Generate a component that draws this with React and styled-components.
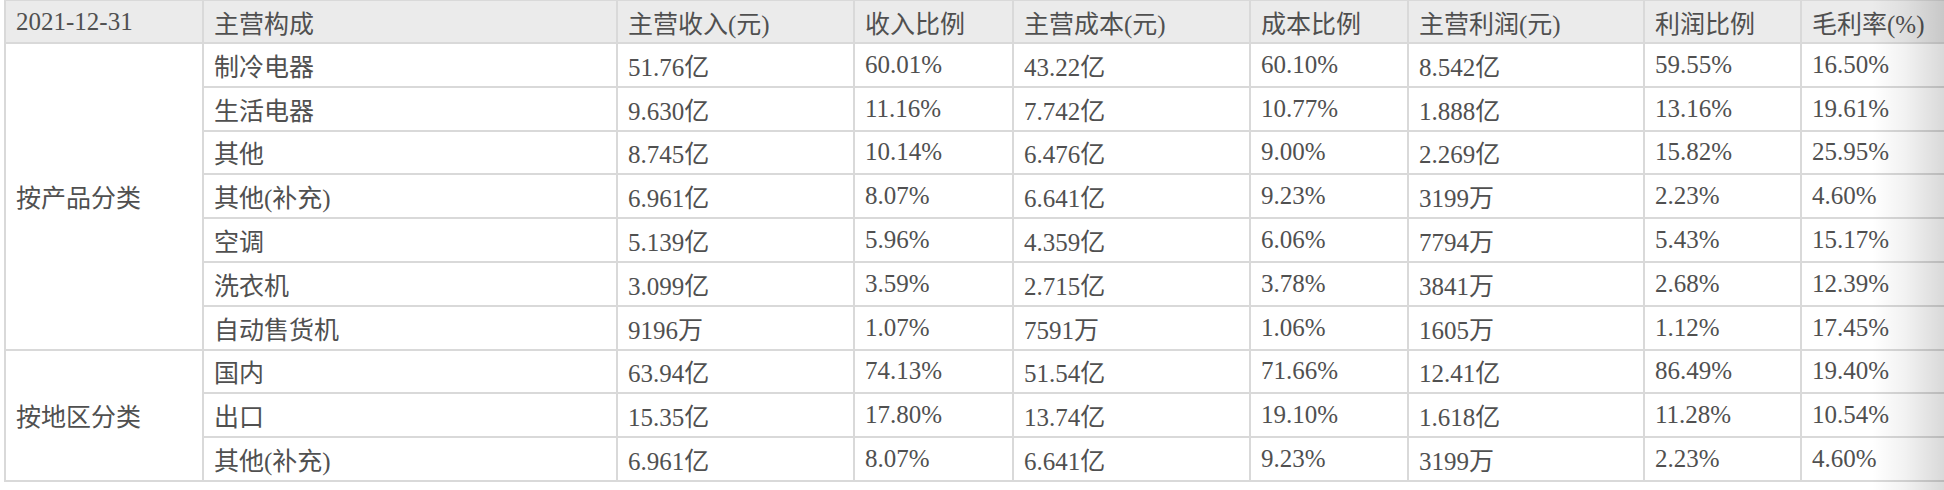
import React from "react";
import styled, { createGlobalStyle } from "styled-components";

const Global = createGlobalStyle`
  html, body { margin: 0; padding: 0; background: #ffffff; }
  body { font-family: "Liberation Serif", "Noto Sans CJK SC", serif; }
`;

const Viewport = styled.div`
  position: relative;
  width: 1944px;
  height: 490px;
  overflow: hidden;
  background: #fff;
`;

const Scroller = styled.div`
  padding-left: 4px;
  margin-top: -1px;
`;

const Table = styled.table`
  border-collapse: collapse;
  table-layout: fixed;
  width: 1955px;
  font-family: "Liberation Serif", "Noto Sans CJK SC", serif;
  font-size: 25px;
  color: #505050;
  border: 2px solid #d9d9d9;
`;

const HeadCell = styled.th`
  background: #ebebeb;
  font-weight: normal;
  text-align: left;
  height: 41px;
  padding: 0 10px;
  border: 2px solid #d9d9d9;
  white-space: nowrap;
  overflow: hidden;
`;

const Cell = styled.td`
  height: 41.8px;
  padding: 0 10px;
  border: 2px solid #d9d9d9;
  white-space: nowrap;
  vertical-align: middle;
  overflow: hidden;
`;

const RightShade = styled.div`
  position: absolute;
  top: 0;
  right: 0;
  width: 72px;
  height: 100%;
  pointer-events: none;
  background: linear-gradient(to right, rgba(0, 0, 0, 0) 0%, rgba(0, 0, 0, 0.05) 45%, rgba(0, 0, 0, 0.15) 100%);
`;

const widths = [198, 414, 237, 159, 237, 158, 236, 157, 159];

const headers = [
  "2021-12-31",
  "主营构成",
  "主营收入(元)",
  "收入比例",
  "主营成本(元)",
  "成本比例",
  "主营利润(元)",
  "利润比例",
  "毛利率(%)",
];

const groups = [
  {
    name: "按产品分类",
    rows: [
      ["制冷电器", "51.76亿", "60.01%", "43.22亿", "60.10%", "8.542亿", "59.55%", "16.50%"],
      ["生活电器", "9.630亿", "11.16%", "7.742亿", "10.77%", "1.888亿", "13.16%", "19.61%"],
      ["其他", "8.745亿", "10.14%", "6.476亿", "9.00%", "2.269亿", "15.82%", "25.95%"],
      ["其他(补充)", "6.961亿", "8.07%", "6.641亿", "9.23%", "3199万", "2.23%", "4.60%"],
      ["空调", "5.139亿", "5.96%", "4.359亿", "6.06%", "7794万", "5.43%", "15.17%"],
      ["洗衣机", "3.099亿", "3.59%", "2.715亿", "3.78%", "3841万", "2.68%", "12.39%"],
      ["自动售货机", "9196万", "1.07%", "7591万", "1.06%", "1605万", "1.12%", "17.45%"],
    ],
  },
  {
    name: "按地区分类",
    rows: [
      ["国内", "63.94亿", "74.13%", "51.54亿", "71.66%", "12.41亿", "86.49%", "19.40%"],
      ["出口", "15.35亿", "17.80%", "13.74亿", "19.10%", "1.618亿", "11.28%", "10.54%"],
      ["其他(补充)", "6.961亿", "8.07%", "6.641亿", "9.23%", "3199万", "2.23%", "4.60%"],
    ],
  },
];

export default function App() {
  return (
    <>
      <Global />
      <Viewport>
        <Scroller>
          <Table>
            <colgroup>
              {widths.map((w, i) => (
                <col key={i} style={{ width: w }} />
              ))}
            </colgroup>
            <thead>
              <tr>
                {headers.map((h) => (
                  <HeadCell key={h}>{h}</HeadCell>
                ))}
              </tr>
            </thead>
            <tbody>
              {groups.map((g) =>
                g.rows.map((r, i) => (
                  <tr key={g.name + i}>
                    {i === 0 && <Cell rowSpan={g.rows.length}>{g.name}</Cell>}
                    {r.map((v, j) => (
                      <Cell key={j}>{v}</Cell>
                    ))}
                  </tr>
                ))
              )}
            </tbody>
          </Table>
        </Scroller>
        <RightShade />
      </Viewport>
    </>
  );
}
